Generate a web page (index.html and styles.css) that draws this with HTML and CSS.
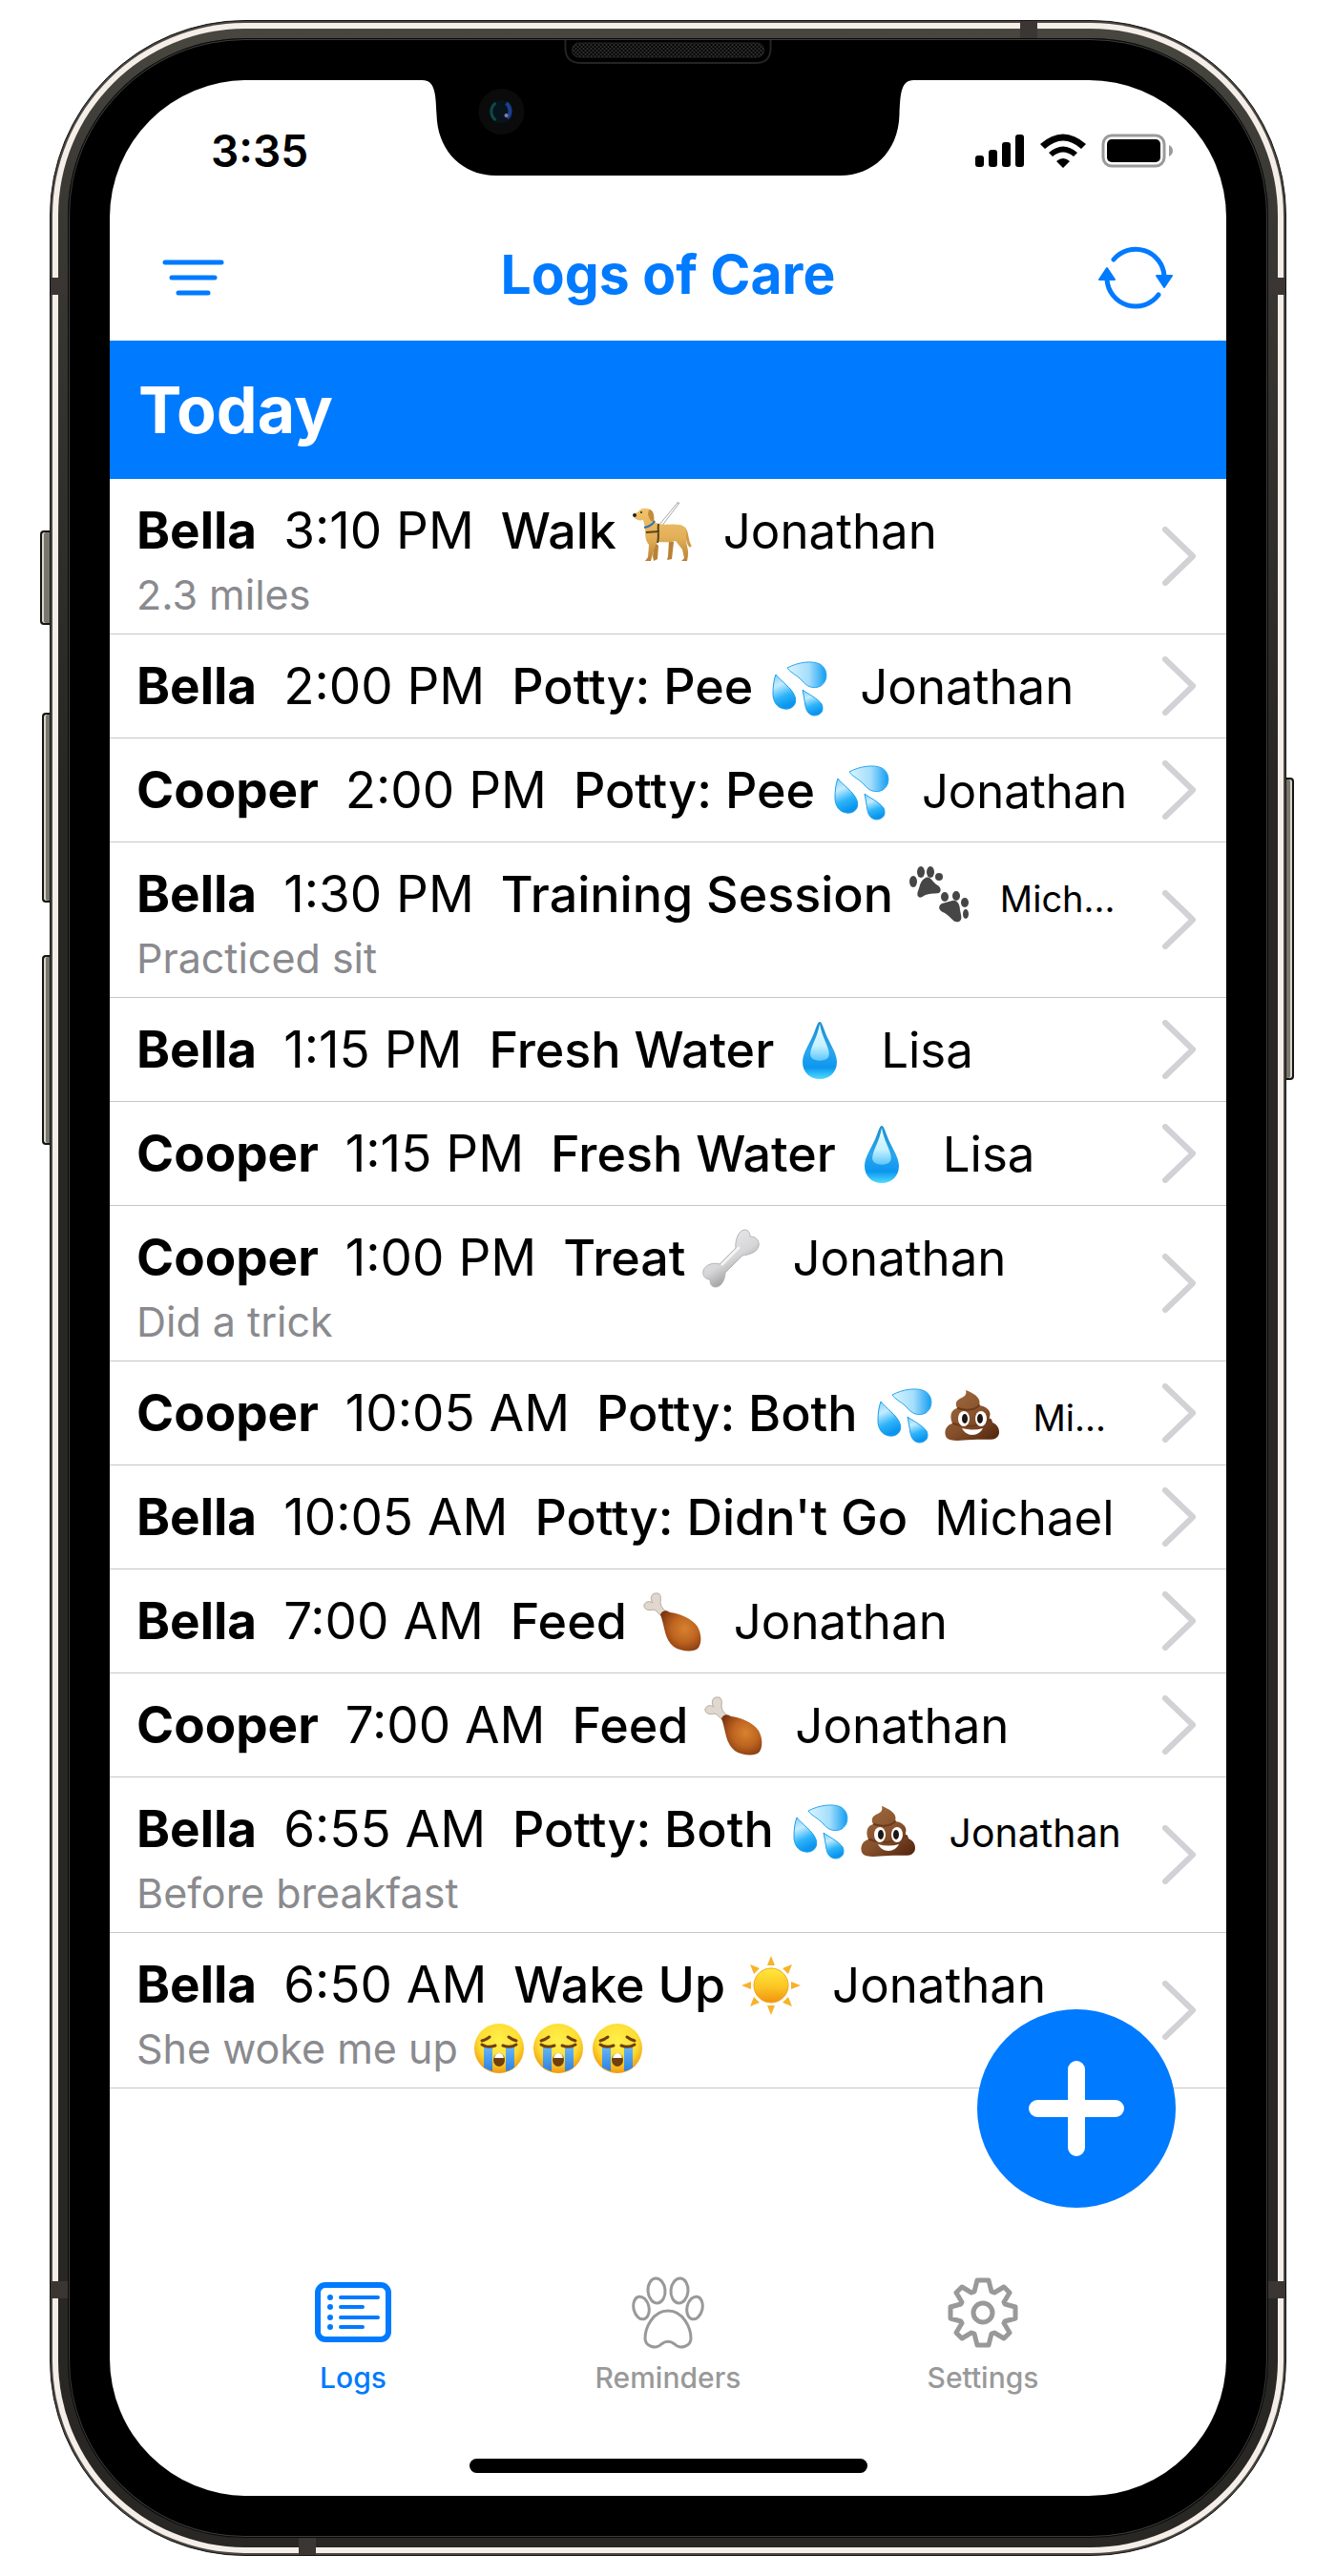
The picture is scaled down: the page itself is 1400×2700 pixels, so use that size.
FILE: index.html
```html
<!DOCTYPE html>
<html lang="en">
<head>
<meta charset="utf-8">
<meta name="viewport" content="width=device-width, initial-scale=1">
<title>Logs of Care</title>
<link rel="stylesheet" href="styles.css">
</head>
<body>
<svg class="sprite" aria-hidden="true">
  <defs>
    <linearGradient id="water" x1="0" y1="0" x2="0.3" y2="1"><stop offset="0" stop-color="#7fd0fb"/><stop offset="0.35" stop-color="#c4ecff"/><stop offset="0.7" stop-color="#2fb4fa"/><stop offset="1" stop-color="#0b95ee"/></linearGradient>
    <linearGradient id="side-water" x1="0" y1="0" x2="1" y2="0"><stop offset="0" stop-color="#d9f4ff"/><stop offset="0.55" stop-color="#a4defc"/><stop offset="1" stop-color="#129df2"/></linearGradient>
    <linearGradient id="deep-water" x1="0" y1="0" x2="0" y2="1"><stop offset="0" stop-color="#1a8fd0"/><stop offset="0.5" stop-color="#2aa6ee"/><stop offset="0.8" stop-color="#0d96f0"/><stop offset="1" stop-color="#4fdcff"/></linearGradient>
    <linearGradient id="shine" x1="0" y1="0" x2="0" y2="1"><stop offset="0" stop-color="#f0fdff"/><stop offset="0.6" stop-color="#c5f1ff"/><stop offset="1" stop-color="#5cc6fb"/></linearGradient>
    <linearGradient id="fur" x1="0" y1="0" x2="0" y2="1"><stop offset="0" stop-color="#f0c36c"/><stop offset="0.55" stop-color="#e3b058"/><stop offset="1" stop-color="#b98235"/></linearGradient>
    <linearGradient id="bone-fill" x1="0" y1="0" x2="0.6" y2="1"><stop offset="0" stop-color="#f4f4f6"/><stop offset="0.6" stop-color="#d6d6d8"/><stop offset="1" stop-color="#858585"/></linearGradient>
    <linearGradient id="choco" x1="0" y1="0" x2="0.8" y2="1"><stop offset="0" stop-color="#a56d42"/><stop offset="0.6" stop-color="#85502b"/><stop offset="1" stop-color="#592a12"/></linearGradient>
    <radialGradient id="meat" cx="0.6" cy="0.45" r="0.65"><stop offset="0" stop-color="#d8822f"/><stop offset="0.5" stop-color="#bd6420"/><stop offset="1" stop-color="#7f3410"/></radialGradient>
    <linearGradient id="sunny" x1="0" y1="0" x2="0" y2="1"><stop offset="0" stop-color="#ffe93c"/><stop offset="0.55" stop-color="#fcc424"/><stop offset="1" stop-color="#f09310"/></linearGradient>
    <radialGradient id="face" cx="0.5" cy="0.35" r="0.68"><stop offset="0" stop-color="#fff04a"/><stop offset="0.6" stop-color="#fddc32"/><stop offset="1" stop-color="#ef8f0b"/></radialGradient>
    <linearGradient id="tear" x1="0" y1="0" x2="0" y2="1"><stop offset="0" stop-color="#6cb8f4"/><stop offset="1" stop-color="#2a83e4"/></linearGradient>
  </defs>

  <symbol id="sweat" viewBox="0 0 62 62">
    <path fill="url(#side-water)" stroke="#25a5ef" d="M19 11C30 5 45 3 53 7C62 12 62 25 54 30C46 34 39 30 35 25C30 19 22 16 19 11Z"/>
    <path fill="url(#water)" stroke="#1b9eea" d="M7 18C12 25 24 32 27 41C30 50 23 55 16 54C8 53 4 46 4 38C4 30 5 23 7 18Z"/>
    <path fill="url(#water)" stroke="#1b9eea" d="M35 34C40 38 51 43 55 49C58 56 54 61 47 61C41 60 39 56 38 51C37 45 36 39 35 34Z"/>
  </symbol>

  <symbol id="droplet" viewBox="0 0 62 62">
    <path fill="url(#deep-water)" d="M31 1C33 1 34 5 36 10C40 22 49 33 49 43C49 54 41 61 31 61S13 54 13 43C13 33 22 22 26 10C28 5 29 1 31 1Z"/>
    <path fill="url(#shine)" d="M31 3C32 9 34 15 37 22C40 29 42 35 40 38C37 43 25 43 22 38C20 35 22 29 25 22C28 15 30 9 31 3Z"/>
  </symbol>

  <symbol id="guide-dog" viewBox="0 0 62 62">
    <path fill="none" stroke="#a8a8a8" d="M27 25L47 1M30 26L49 1L46 1"/>
    <path fill="#b98136" d="M23 42L27 46L26 60L22 62L21 57ZM38 41L43 42L41 60L36 61L37 57Z"/>
    <path fill="none" stroke="#cf9a48" stroke-width="3" stroke-linecap="round" d="M54 28C58 33 56 40 60 46"/>
    <path fill="url(#fur)" d="M1 14C2 11 6 11 7 9C10 6 17 6 20 10C23 13 22 18 23 21C29 26 40 22 49 24C56 25 57 30 56 36C55 43 59 49 58 56L57 62H51L54 59L52 50L45 41C39 43 33 42 26 42C23 47 21 54 19 62H13L16 58L17 45C13 41 13 33 13 27L11 19C8 20 3 19 1 16Z"/>
    <path fill="#c58b3c" d="M17 8C21 8 23 13 22 20C19 22 17 17 16 13Z"/>
    <path fill="none" stroke="#2b73b4" stroke-width="2" d="M12 27C17 26 21 24 23 20"/>
    <path fill="none" stroke="#5a431c" stroke-width="2" d="M27 23C26 30 28 36 26 43M14 32L28 31"/>
    <circle cx="2" cy="14" r="2" fill="#222"/><circle cx="9" cy="11" r="1" fill="#222"/>
  </symbol>

  <symbol id="paws" viewBox="0 0 62 62">
    <g fill="#464646">
      <ellipse cx="4" cy="17" rx="4" ry="6"/><ellipse cx="12" cy="7" rx="4" ry="6"/><ellipse cx="22" cy="7" rx="4" ry="6"/><ellipse cx="31" cy="12" rx="4" ry="4"/>
      <path d="M17 13C22 11 24 17 28 20C33 22 34 27 31 29C26 30 20 29 15 32C10 36 7 32 9 27C11 22 11 16 17 13Z"/>
      <ellipse cx="37" cy="33" rx="4" ry="5"/><ellipse cx="49" cy="32" rx="4" ry="5"/><ellipse cx="58" cy="39" rx="4" ry="5"/><ellipse cx="59" cy="51" rx="3" ry="5"/>
      <path d="M45 37C50 36 53 41 53 47C54 52 56 57 52 59C46 61 44 54 37 50C31 48 29 43 34 40C38 39 41 38 45 37Z"/>
    </g>
  </symbol>

  <symbol id="bone" viewBox="0 0 62 62">
    <path fill="url(#bone-fill)" stroke="#b4b4b6" d="M36 20C35 14 38 2 45 1C50 1 51 5 51 8C57 8 61 12 60 18C58 25 50 27 43 28L25 46C25 51 22 61 15 61C10 61 9 57 9 53C4 53 1 49 2 44C4 37 13 35 19 37Z"/>
    <path fill="none" stroke="#fff" stroke-width="3" stroke-linecap="round" opacity="0.7" d="M22 37L39 20"/>
  </symbol>

  <symbol id="poop" viewBox="0 0 62 62">
    <path fill="url(#choco)" d="M24 6C32 9 41 14 38 22C47 23 51 29 49 34C48 37 52 36 52 40C60 43 61 53 56 56C53 59 45 57 31 58C17 59 8 60 4 56C0 50 4 42 10 41C7 34 8 27 15 25C12 19 15 16 20 14C24 12 25 10 24 6Z"/>
    <path fill="none" stroke="#6a3a1b" stroke-width="2" stroke-linecap="round" d="M16 25C24 28 34 27 38 22M11 41C24 46 41 44 50 37"/>
    <ellipse cx="22" cy="36" rx="6" ry="8" fill="#fff"/><ellipse cx="40" cy="36" rx="6" ry="8" fill="#fff"/>
    <ellipse cx="23" cy="36" rx="3" ry="5" fill="#1d1614"/><ellipse cx="39" cy="36" rx="3" ry="5" fill="#1d1614"/>
    <path fill="#fff" d="M20 46Q31 49 42 46C40 50 36 53 31 53S22 50 20 46Z"/>
  </symbol>

  <symbol id="drumstick" viewBox="0 0 62 62">
    <path fill="#e0d8ce" stroke="#b5aaa0" d="M10 11C7 8 8 1 13 1C18 0 19 5 18 10C18 14 21 18 24 20L19 25C16 22 14 19 11 18C5 20 0 17 1 13C3 9 7 9 10 11Z"/>
    <path fill="url(#meat)" d="M18 23C20 19 24 18 28 21C37 22 51 27 57 36C62 45 61 55 57 59C53 63 39 62 32 57C22 49 23 37 18 23Z"/>
  </symbol>

  <symbol id="sun" viewBox="0 0 62 62">
    <g fill="#f8b22a">
      <path d="M31 0L35 10H27ZM31 62L27 52H35ZM0 31L10 27V35ZM62 31L52 35V27ZM9 9L19 13L13 19ZM53 9L49 19L43 13ZM9 53L13 43L19 49ZM53 53L43 49L49 43Z"/>
    </g>
    <circle cx="31" cy="31" r="18" fill="url(#sunny)" stroke="#efa51f"/>
  </symbol>

  <symbol id="sob" viewBox="0 0 52 52">
    <circle cx="26" cy="26" r="26" fill="url(#face)"/>
    <path fill="url(#tear)" d="M10 23H19V50Q14 48 10 46ZM33 23H42V46Q38 49 33 50Z"/>
    <path fill="none" stroke="#6f3f0c" stroke-width="3" stroke-linecap="round" d="M8 22Q14 26 22 23M30 23Q38 26 44 22M8 18Q12 17 16 14M44 18Q40 17 36 14"/>
    <ellipse cx="26" cy="38" rx="6" ry="7" fill="#70400f"/><path fill="#fff" d="M21 36Q22 31 26 31T31 36Z"/>
  </symbol>

  <symbol id="chevron" viewBox="0 0 36 62">
    <path fill="none" stroke="#d1d1d6" stroke-width="6" stroke-linecap="round" stroke-linejoin="round" d="M3 3L32 31L3 59"/>
  </symbol>
</svg>

<div class="phone">
  <span class="key key-mute"></span>
  <span class="key key-up"></span>
  <span class="key key-down"></span>
  <span class="key key-power"></span>
  <div class="rail"><div class="band"><div class="bezel">
    <main class="screen">
      <header>
        <div class="status">
          <span class="clock">3:35</span>
          <span class="indicators">
            <svg width="52" height="36" viewBox="0 0 52 36" aria-label="Signal"><rect y="23" width="9" height="12" rx="3"/><rect x="14" y="17" width="9" height="18" rx="3"/><rect x="28" y="9" width="9" height="26" rx="3"/><rect x="42" y="1" width="9" height="34" rx="3"/></svg>
            <svg width="48" height="36" viewBox="0 0 48 36" aria-label="Wi-Fi"><path d="M24 36L17 29Q24 23 31 29ZM9 20Q24 7 39 20L35 24Q24 15 13 24ZM0 11Q24-10 48 11L43 16Q24-1 5 16Z"/></svg>
            <svg width="76" height="36" viewBox="0 0 76 36" aria-label="Battery"><rect x="2" y="2" width="64" height="32" rx="9" fill="none" stroke="#9a9a9a" stroke-width="3"/><rect x="6" y="6" width="56" height="24" rx="5"/><path fill="#9a9a9a" d="M71 12Q75 14 75 18T71 24Z"/></svg>
          </span>
        </div>
        <div class="topbar">
          <button class="icon-button" type="button" aria-label="Filter">
            <svg width="66" height="40" viewBox="0 0 66 40" fill="none" stroke="currentColor" stroke-width="5" stroke-linecap="round"><path d="M3 4H62M10 20H55M17 36H48"/></svg>
          </button>
          <h1>Logs of Care</h1>
          <button class="icon-button" type="button" aria-label="Refresh">
            <svg width="80" height="66" viewBox="0 0 80 66"><path fill="none" stroke="currentColor" stroke-width="5" stroke-linecap="round" d="M17 14A30 30 0 0 1 70 31M10 35A30 30 0 0 0 64 51"/><path fill="currentColor" stroke="currentColor" stroke-width="2" stroke-linejoin="round" d="M62 31H78L70 43ZM2 35H18L10 23Z"/></svg>
          </button>
        </div>
      </header>

      <section class="day">
        <h2>Today</h2>
        <ul class="logs">
          <li><a class="log" href="#"><span class="entry"><span class="line"><strong>Bella</strong><time>3:10 PM</time><b>Walk <svg class="emoji"><use href="#guide-dog"/></svg></b><span>Jonathan</span></span><span class="note">2.3 miles</span></span><svg class="chevron"><use href="#chevron"/></svg></a></li>
          <li><a class="log" href="#"><span class="entry"><span class="line"><strong>Bella</strong><time>2:00 PM</time><b>Potty: Pee <svg class="emoji"><use href="#sweat"/></svg></b><span>Jonathan</span></span></span><svg class="chevron"><use href="#chevron"/></svg></a></li>
          <li><a class="log" href="#"><span class="entry"><span class="line"><strong>Cooper</strong><time>2:00 PM</time><b>Potty: Pee <svg class="emoji"><use href="#sweat"/></svg></b><span class="snug">Jonathan</span></span></span><svg class="chevron"><use href="#chevron"/></svg></a></li>
          <li><a class="log" href="#"><span class="entry"><span class="line"><strong>Bella</strong><time>1:30 PM</time><b>Training Session <svg class="emoji"><use href="#paws"/></svg></b><span class="cut">Mich...</span></span><span class="note">Practiced sit</span></span><svg class="chevron"><use href="#chevron"/></svg></a></li>
          <li><a class="log" href="#"><span class="entry"><span class="line"><strong>Bella</strong><time>1:15 PM</time><b>Fresh Water <svg class="emoji"><use href="#droplet"/></svg></b><span>Lisa</span></span></span><svg class="chevron"><use href="#chevron"/></svg></a></li>
          <li><a class="log" href="#"><span class="entry"><span class="line"><strong>Cooper</strong><time>1:15 PM</time><b>Fresh Water <svg class="emoji"><use href="#droplet"/></svg></b><span>Lisa</span></span></span><svg class="chevron"><use href="#chevron"/></svg></a></li>
          <li><a class="log" href="#"><span class="entry"><span class="line"><strong>Cooper</strong><time>1:00 PM</time><b>Treat <svg class="emoji"><use href="#bone"/></svg></b><span>Jonathan</span></span><span class="note">Did a trick</span></span><svg class="chevron"><use href="#chevron"/></svg></a></li>
          <li><a class="log" href="#"><span class="entry"><span class="line"><strong>Cooper</strong><time>10:05 AM</time><b>Potty: Both <svg class="emoji"><use href="#sweat"/></svg><svg class="emoji"><use href="#poop"/></svg></b><span class="cut">Mi...</span></span></span><svg class="chevron"><use href="#chevron"/></svg></a></li>
          <li><a class="log" href="#"><span class="entry"><span class="line"><strong>Bella</strong><time>10:05 AM</time><b>Potty: Didn't Go</b><span>Michael</span></span></span><svg class="chevron"><use href="#chevron"/></svg></a></li>
          <li><a class="log" href="#"><span class="entry"><span class="line"><strong>Bella</strong><time>7:00 AM</time><b>Feed <svg class="emoji"><use href="#drumstick"/></svg></b><span>Jonathan</span></span></span><svg class="chevron"><use href="#chevron"/></svg></a></li>
          <li><a class="log" href="#"><span class="entry"><span class="line"><strong>Cooper</strong><time>7:00 AM</time><b>Feed <svg class="emoji"><use href="#drumstick"/></svg></b><span>Jonathan</span></span></span><svg class="chevron"><use href="#chevron"/></svg></a></li>
          <li><a class="log" href="#"><span class="entry"><span class="line"><strong>Bella</strong><time>6:55 AM</time><b>Potty: Both <svg class="emoji"><use href="#sweat"/></svg><svg class="emoji"><use href="#poop"/></svg></b><span class="small">Jonathan</span></span><span class="note">Before breakfast</span></span><svg class="chevron"><use href="#chevron"/></svg></a></li>
          <li><a class="log" href="#"><span class="entry"><span class="line"><strong>Bella</strong><time>6:50 AM</time><b>Wake Up <svg class="emoji"><use href="#sun"/></svg></b><span>Jonathan</span></span><span class="note">She woke me up <svg class="emoji"><use href="#sob"/></svg><svg class="emoji"><use href="#sob"/></svg><svg class="emoji"><use href="#sob"/></svg></span></span><svg class="chevron"><use href="#chevron"/></svg></a></li>
        </ul>
      </section>

      <nav class="tabs">
        <a class="tab active" href="#" aria-current="page">
          <svg width="82" height="76" viewBox="0 0 82 76" fill="none" stroke="currentColor" stroke-linecap="round"><rect x="4" y="9" width="74" height="57" rx="8" stroke-width="6"/><path stroke-width="4" d="M28 22H67M28 32H51M28 43H67M28 53H51"/><path stroke-width="6" d="M17 22h0M17 32h0M17 43h0M17 53h0"/></svg>
          Logs
        </a>
        <a class="tab" href="#">
          <svg width="76" height="76" viewBox="0 0 76 76" fill="none" stroke="currentColor" stroke-width="3"><ellipse cx="26" cy="15" rx="9" ry="13" transform="rotate(-5 26 15)"/><ellipse cx="50" cy="15" rx="9" ry="13" transform="rotate(5 50 15)"/><ellipse cx="10" cy="33" rx="8" ry="12" transform="rotate(-13 10 33)"/><ellipse cx="66" cy="33" rx="8" ry="12" transform="rotate(13 66 33)"/><path d="M38 36C54 36 62 54 62 65C62 73 51 77 45 71C40 67 36 67 31 71C25 77 14 73 14 65C14 54 22 36 38 36Z"/></svg>
          Reminders
        </a>
        <a class="tab" href="#">
          <svg width="76" height="76" viewBox="0 0 76 76" fill="none" stroke="currentColor" stroke-width="5" stroke-linejoin="round"><circle cx="38" cy="38" r="10"/><path d="M32 4H44L47 16L50 17L60 11L66 17L60 27L61 29L72 32V44L61 47L60 49L66 59L60 65L50 59L47 60L44 72H32L29 60L26 59L16 65L10 59L16 49L15 47L4 44V32L15 29L16 27L10 17L16 11L26 17L29 16Z"/></svg>
          Settings
        </a>
      </nav>
      <div class="home-bar"></div>

      <button class="add" type="button" aria-label="Add log">
        <svg width="100" height="100" viewBox="0 0 100 100" fill="none" stroke="#fff" stroke-width="18" stroke-linecap="round"><path d="M50 9V91M9 50H91"/></svg>
      </button>
    </main>
    <svg class="notch" width="515" height="143" viewBox="0 0 515 143" aria-hidden="true">
      <defs><pattern id="mesh" width="4" height="4" patternUnits="userSpaceOnUse"><rect width="2" height="2" fill="#303030"/><rect x="2" y="2" width="2" height="2" fill="#303030"/></pattern></defs>
      <path d="M0 42C14 42 14 58 15 78C16 118 44 142 77 142H438C471 142 499 118 500 78C501 58 501 42 515 42V0H0Z"/>
      <path fill="none" stroke="#242424" stroke-width="2" d="M150 0V10Q151 24 166 24H350Q364 24 365 10V0"/>
      <rect x="157" y="3" width="201" height="15" rx="7" fill="url(#mesh)" stroke="#252525"/>
      <circle cx="83" cy="75" r="24" fill="#0b0b0c"/>
      <circle cx="83" cy="75" r="12" fill="#07141c"/>
      <path fill="none" stroke="#0d4a4a" stroke-width="3" d="M77 66A11 11 0 0 0 77 84"/><path fill="none" stroke="#1b3f8b" stroke-width="4" d="M88 66A11 11 0 0 1 89 82"/><circle cx="88" cy="79" r="2" fill="#8f7bb5"/>
    </svg>
  </div></div></div>
  <span class="seam seam-left seam-high"></span>
  <span class="seam seam-left seam-low"></span>
  <span class="seam seam-right seam-high"></span>
  <span class="seam seam-right seam-low"></span>
  <span class="seam seam-top"></span>
  <span class="seam seam-bottom"></span>
</div>
</body>
</html>
```

FILE: styles.css
```css
:root {
  --blue: #007aff;
  --muted: #8a8a8e;
  --tab: #999;
  --rule: #c6c6c8;
}

* { box-sizing: border-box; }

body {
  margin: 0;
  padding: 21px 52px;
  background: #fff;
  color: #000;
  font-family: Inter, "Liberation Sans", sans-serif;
}

h1, h2, ul { margin: 0; padding: 0; list-style: none; }
a { color: inherit; text-decoration: none; }
button { border: 0; padding: 0; background: none; color: inherit; font: inherit; }
svg { display: block; }
.sprite { position: absolute; width: 0; height: 0; }

/* Device frame */
.phone {
  position: relative;
  max-width: 1296px;
  margin: 0 auto;
  padding: 2px;
  border: 1px solid #141412;
  border-radius: 205px;
  background: #4a4843;
}
.rail { padding: 6px; border-radius: 202px; background: #f5eee8; }
.band {
  padding: 10px;
  border-radius: 196px;
  background: linear-gradient(#47463f, #3a3934 6%, #282724 30%);
}
.bezel {
  position: relative;
  padding: 44px;
  border-radius: 186px;
  background: #000;
  box-shadow: inset 0 0 0 1px #080808, inset 0 0 0 2px #3c3c3c;
}
.screen {
  position: relative;
  overflow: hidden;
  border-radius: 144px;
  background: #fff;
}
.notch { position: absolute; top: 2px; left: 50%; transform: translateX(-50%); }

.key {
  position: absolute;
  left: -9px;
  width: 8px;
  border: 2px solid #161512;
  border-right: 0;
  border-radius: 4px 0 0 4px;
  background: #777770;
  box-shadow: inset 2px 0 #d8d2c8;
}
.key-mute { left: -11px; width: 10px; top: 534px; height: 99px; }
.key-up { top: 725px; height: 199px; }
.key-down { top: 979px; height: 199px; }
.key-power { left: auto; right: -9px; top: 793px; height: 317px; transform: rotate(180deg); }

.seam { position: absolute; width: 18px; height: 18px; background: #3b3633; }
.seam-left { left: 0; }
.seam-right { right: 0; }
.seam-high { top: 269px; }
.seam-low { bottom: 269px; }
.seam-top { top: 0; right: 260px; }
.seam-bottom { bottom: 0; left: 260px; }

/* Status and title bars */
.status {
  display: flex;
  align-items: center;
  justify-content: space-between;
  padding: 44px 55px 37px 106px;
}
.clock { font-size: 46px; font-weight: 600; line-height: 60px; }
.indicators { display: flex; gap: 16px; }
.topbar {
  display: grid;
  grid-template-columns: 1fr auto 1fr;
  align-items: center;
  height: 132px;
  padding: 0 55px;
  color: var(--blue);
}
.icon-button:last-child { justify-self: end; }
h1 { padding-bottom: 6px; font-size: 57px; font-weight: 700; line-height: 72px; }

/* Log list */
.day { padding-bottom: 140px; }
h2 {
  padding: 28px 30px 29px;
  background: var(--blue);
  color: #fff;
  font-size: 68px;
  line-height: 88px;
}
.log {
  display: flex;
  align-items: center;
  justify-content: space-between;
  padding-right: 31px;
  border-bottom: 1px solid var(--rule);
}
.entry { padding: 21px 0 14px 28px; }
.line {
  display: flex;
  align-items: baseline;
  gap: 28px;
  height: 66px;
  margin-bottom: 7px;
  font-size: 51px;
  line-height: 66px;
  white-space: nowrap;
}
.line strong { font-size: 53px; font-weight: 700; }
.line time { font-size: 53px; }
.line b { font-size: 52px; font-weight: 500; }
/* Names shrink to fit beside long entries */
.line .snug { font-size: 49px; }
.line .small { font-size: 41px; line-height: 50px; }
.line .cut { font-size: 38px; line-height: 50px; }
.emoji {
  display: inline-block;
  width: 62px;
  height: 62px;
  margin: 0 5px 0 3px;
  vertical-align: -13px;
}
.emoji + .emoji { margin-left: 5px; }
.note { display: block; color: var(--muted); font-size: 43px; line-height: 54px; }
.note .emoji { width: 52px; height: 52px; margin: 0 5px; vertical-align: -10px; }
.chevron { flex: none; width: 36px; height: 62px; }

/* Tabs */
.tabs {
  display: grid;
  grid-template-columns: repeat(3, 1fr);
  padding: 57px 90px 67px;
}
.tab {
  display: grid;
  justify-items: center;
  gap: 12px;
  color: var(--tab);
  font-size: 30px;
  font-weight: 500;
  line-height: 36px;
}
.tab.active { color: var(--blue); }
.home-bar {
  width: 417px;
  height: 15px;
  margin: 0 auto 24px;
  border-radius: 8px;
  background: #000;
}
.add {
  position: absolute;
  right: 53px;
  bottom: 302px;
  display: grid;
  place-items: center;
  width: 208px;
  height: 208px;
  border-radius: 50%;
  background: var(--blue);
}
```
